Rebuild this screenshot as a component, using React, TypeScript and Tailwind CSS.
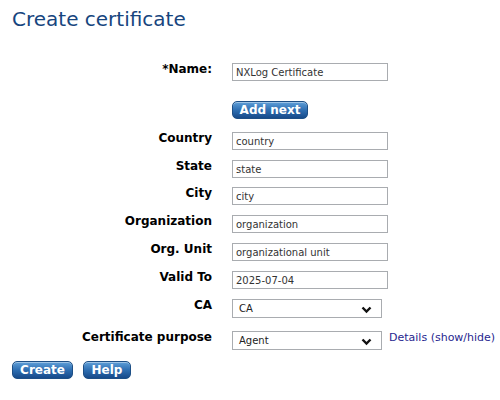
import React from "react";

const inputCls =
  "h-[18px] w-[156px] flex-none border border-[#a9acb0] bg-white px-[3px] text-[10px] leading-[16px] text-[#333] outline-none";

function Chevron() {
  return (
    <svg width="11" height="8" viewBox="0 0 11 8" className="absolute right-[9px] top-[6px]">
      <path d="M1.5 1.5 L5.5 5.5 L9.5 1.5" fill="none" stroke="#111" strokeWidth="2.4" />
    </svg>
  );
}

function Row({ label, children, h = 28 }: { label: string; children: React.ReactNode; h?: number }) {
  return (
    <div className="flex items-start" style={{ height: h }}>
      <div className="w-[200px] flex-none -mt-[2px] whitespace-nowrap text-right text-[12px] font-bold leading-[16px] text-black">
        {label}
      </div>
      <div className="ml-5 flex flex-none items-start">{children}</div>
    </div>
  );
}

function Btn({ children, w }: { children: React.ReactNode; w: number }) {
  return (
    <button
      className="h-[18px] flex-none rounded-[5px] border border-[#1d4f86] bg-gradient-to-b from-[#5f9fd8] via-[#2f6fb2] to-[#174a8a] text-[12px] font-bold leading-[14px] text-white shadow-[inset_0_1px_0_rgba(255,255,255,0.4)]"
      style={{ width: w }}
    >
      {children}
    </button>
  );
}

function Select({ value }: { value: string }) {
  return (
    <div className="relative h-[19px] w-[150px] flex-none border border-[#a9acb0] bg-white text-[10px] leading-[17px] text-[#222]">
      <span className="pl-[6px]">{value}</span>
      <Chevron />
    </div>
  );
}

export default function App() {
  return (
    <div className="h-[400px] w-[500px] bg-white" style={{ fontFamily: '"DejaVu Sans", Verdana, sans-serif' }}>
      <h1 className="px-[12px] pt-[7px] text-[20px] font-normal leading-[24px] text-[#17457e]">Create certificate</h1>
      <div className="pl-[12px] pt-[32px]">
        <Row label="*Name:" h={34}>
          <input className={inputCls} defaultValue="NXLog Certificate" />
        </Row>
        <div className="flex h-[35px]">
          <div className="ml-[220px]">
            <Btn w={76}>Add next</Btn>
          </div>
        </div>
        <Row label="Country">
          <input className={inputCls} defaultValue="country" />
        </Row>
        <Row label="State" h={27}>
          <input className={inputCls} defaultValue="state" />
        </Row>
        <Row label="City">
          <input className={inputCls} defaultValue="city" />
        </Row>
        <Row label="Organization">
          <input className={inputCls} defaultValue="organization" />
        </Row>
        <Row label="Org. Unit">
          <input className={inputCls} defaultValue="organizational unit" />
        </Row>
        <Row label="Valid To">
          <input className={inputCls} defaultValue="2025-07-04" />
        </Row>
        <Row label="CA" h={32}>
          <Select value="CA" />
        </Row>
        <Row label="Certificate purpose" h={30}>
          <Select value="Agent" />
          <a className="ml-[7px] -mt-[1px] whitespace-nowrap text-[11px] leading-[16px] text-[#27278f]">Details (show/hide)</a>
        </Row>
        <div className="flex gap-[10px]">
          <Btn w={61}>Create</Btn>
          <Btn w={48}>Help</Btn>
        </div>
      </div>
    </div>
  );
}
